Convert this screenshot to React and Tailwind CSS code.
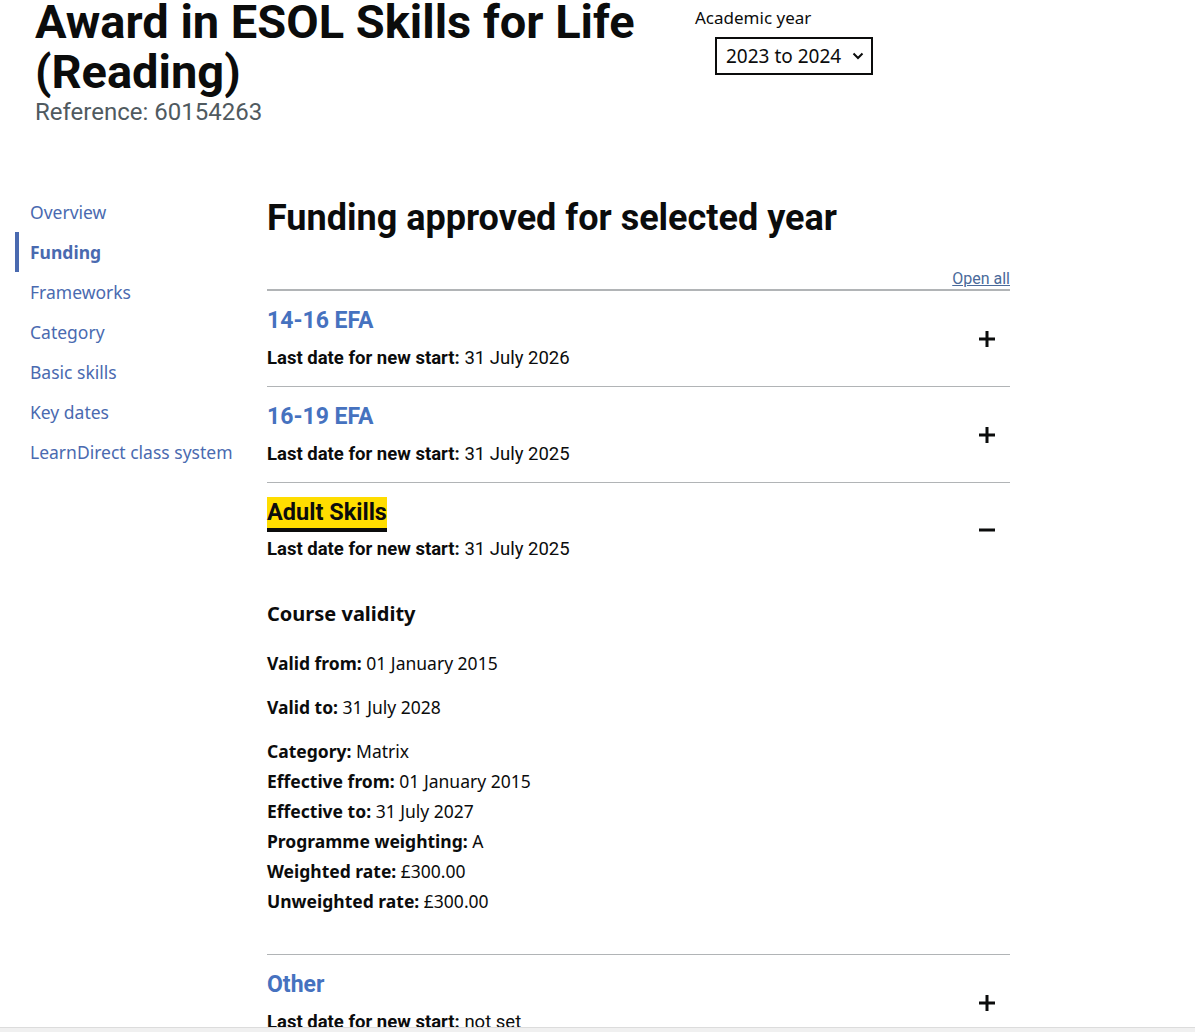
import React from "react";

const condensed = { fontFamily: 'Roboto, "Liberation Sans", sans-serif' };

const navItems = [
  { label: "Overview" },
  { label: "Funding", active: true },
  { label: "Frameworks" },
  { label: "Category" },
  { label: "Basic skills" },
  { label: "Key dates" },
  { label: "LearnDirect class system" },
];

function Plus() {
  return (
    <svg width="16" height="16" viewBox="0 0 16 16" className="shrink-0">
      <rect x="6.5" y="0" width="3" height="16" fill="#0b0c0c" />
      <rect x="0" y="6.5" width="16" height="3" fill="#0b0c0c" />
    </svg>
  );
}

function Minus() {
  return (
    <svg width="16" height="16" viewBox="0 0 16 16" className="shrink-0">
      <rect x="0" y="6.5" width="16" height="3" fill="#0b0c0c" />
    </svg>
  );
}

function SectionHead({ title, date, open, focused }) {
  return (
    <div className="flex items-center justify-between pr-[15px]">
      <div>
        {focused ? (
          <span
            className="inline-block h-[35px] leading-[31px] text-[23.5px] font-bold text-[#0b0c0c] bg-[#ffdd00] border-b-[4px] border-[#0b0c0c]"
            style={condensed}
          >
            {title}
          </span>
        ) : (
          <div className="h-[30px] leading-[30px] text-[23px] font-bold text-[#4672bf]" style={condensed}>
            {title}
          </div>
        )}
        <div className={`${focused ? "mt-[5px]" : "mt-[10px]"} leading-[25px] text-[18.5px] text-[#0b0c0c]`} style={condensed}>
          <span className="font-bold">Last date for new start:</span> {date}
        </div>
      </div>
      {open ? <Minus /> : <Plus />}
    </div>
  );
}

function Field({ label, value }) {
  return (
    <div>
      <span className="font-bold">{label}:</span> {value}
    </div>
  );
}

export default function App() {
  return (
    <div className="min-h-screen bg-white text-[#0b0c0c]" style={{ fontFamily: '"Noto Sans", sans-serif' }}>
      {/* Header */}
      <header className="flex pl-[35px] -mt-[3px]">
        <div className="w-[660px]">
          <h1 className="text-[47px] leading-[50px] font-bold text-[#0b0c0c]" style={condensed}>
            Award in ESOL Skills for Life (Reading)
          </h1>
          <div className="mt-[3px] text-[24px] leading-[25px] text-[#505a5f]" style={condensed}>
            Reference: 60154263
          </div>
        </div>
        <div className="pt-[11px]">
          <div className="text-[17px] leading-[20px]">Academic year</div>
          <div className="ml-[20px] mt-[9px] w-[158px] h-[38px] border-2 border-[#0b0c0c] flex items-center justify-between pl-[9px] pr-[7px]">
            <span className="text-[19px]">2023 to 2024</span>
            <svg width="12" height="8" viewBox="0 0 12 8">
              <path d="M1.5 1.5 L6 6 L10.5 1.5" fill="none" stroke="#0b0c0c" strokeWidth="2" />
            </svg>
          </div>
        </div>
      </header>

      {/* Body */}
      <div className="flex mt-[67px]">
        <nav className="w-[267px] pl-[15px] shrink-0">
          {navItems.map((item) => (
            <div
              key={item.label}
              className={`h-[40px] flex items-center pl-[11px] border-l-4 text-[17.5px] ${
                item.active ? "border-[#4a6ab0] font-bold text-[#4a6ab0]" : "border-transparent text-[#4a6ab0]"
              }`}
            >
              {item.label}
            </div>
          ))}
        </nav>

        <main className="w-[743px]">
          <h2 className="mt-[6px] text-[36px] leading-[40px] font-bold" style={condensed}>
            Funding approved for selected year
          </h2>
          <div className="mt-[30px] text-right leading-[20px]">
            <span className="text-[16px] underline text-[#4a6a9a]" style={condensed}>Open all</span>
          </div>

          <div className="border-t-2 border-[#b1b4b6]">
            <div className="pt-[15px] pb-[15px]">
              <SectionHead title="14-16 EFA" date="31 July 2026" />
            </div>
            <div className="border-t border-[#b1b4b6] pt-[15px] pb-[15px]">
              <SectionHead title="16-19 EFA" date="31 July 2025" />
            </div>
            <div className="border-t border-[#b1b4b6] pt-[14px] pb-[38px]">
              <SectionHead title="Adult Skills" date="31 July 2025" open focused />
              <div className="mt-[39px] text-[20px] leading-[25px] font-bold">Course validity</div>
              <div className="text-[17.5px]">
                <div className="mt-[25px] leading-[25px]">
                  <Field label="Valid from" value="01 January 2015" />
                </div>
                <div className="mt-[19px] leading-[25px]">
                  <Field label="Valid to" value="31 July 2028" />
                </div>
                <div className="mt-[16px] leading-[30px]">
                  <Field label="Category" value="Matrix" />
                  <Field label="Effective from" value="01 January 2015" />
                  <Field label="Effective to" value="31 July 2027" />
                  <Field label="Programme weighting" value="A" />
                  <Field label="Weighted rate" value="£300.00" />
                  <Field label="Unweighted rate" value="£300.00" />
                </div>
              </div>
            </div>
            <div className="border-t border-[#b1b4b6] pt-[15px] pb-[15px]">
              <SectionHead title="Other" date="not set" />
            </div>
          </div>
        </main>
      </div>

      <div className="fixed bottom-0 left-0 right-0 h-[5px] bg-[#f0f0f0] border-t border-[#dcdcdc]" />
    </div>
  );
}
